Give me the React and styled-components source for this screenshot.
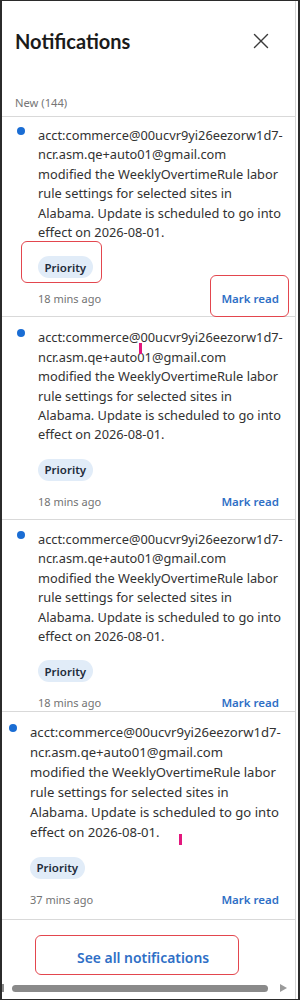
import React from "react";
import styled, { createGlobalStyle } from "styled-components";
import { X } from "lucide-react";

const GlobalStyle = createGlobalStyle`
  html, body {
    margin: 0;
    padding: 0;
    background: #ffffff;
  }
  * {
    box-sizing: border-box;
  }
`;

const font = `"Noto Sans", "Open Sans", "Liberation Sans", sans-serif`;

// outer frame of the flyout
const Frame = styled.div`
  width: 300px;
  height: 1000px;
  display: flex;
  border: 1px solid #2b2b2b;
  border-left-width: 2px;
  border-right-width: 2px;
  background: #fff;
  font-family: ${font};
  overflow: hidden;
`;

const Scroller = styled.div`
  flex: 0 0 294px;
  min-width: 0;
  display: flex;
  flex-direction: column;
  border-right: 1px solid #d6d6d6;
`;

const Header = styled.div`
  height: 80px;
  display: flex;
  align-items: center;
  justify-content: space-between;
  padding: 0 21px 0 13px;
`;

const Title = styled.h1`
  margin: 0;
  font-family: Lato, ${font};
  font-size: 20px;
  line-height: 24px;
  font-weight: 700;
  color: #1b1b1b;
`;

const CloseButton = styled.button`
  display: flex;
  align-items: center;
  justify-content: center;
  padding: 0;
  border: 0;
  background: none;
  color: #3b3b3b;
`;

const SectionLabel = styled.div`
  margin-top: 14px;
  padding: 0 0 5px 13px;
  font-size: 11.2px;
  line-height: 16px;
  color: #767676;
  border-bottom: 1px solid #d9d9d9;
`;

const Item = styled.div`
  position: relative;
  display: flex;
  align-items: flex-start;
  padding: ${(p) => p.$pt}px 11px ${(p) => p.$pb}px ${(p) => 15 - p.$shift}px;
  border-bottom: 1px solid #d9d9d9;
`;

const Dot = styled.span`
  flex: 0 0 8px;
  width: 8px;
  height: 8px;
  margin-top: 1px;
  border-radius: 50%;
  background: #1a6dd4;
`;

const Body = styled.div`
  flex: 1;
  min-width: 0;
  margin-left: 13px;
  display: flex;
  flex-direction: column;
`;

const Message = styled.p`
  margin: 0;
  font-size: ${(p) => 12.8 * p.$scale}px;
  line-height: ${(p) => 19.4 * p.$scale}px;
  color: #323232;
  white-space: nowrap;
`;

const Tags = styled.div`
  margin-top: 14px;
  display: flex;
`;

const Chip = styled.span`
  height: 22px;
  padding: 0 6.5px;
  display: inline-flex;
  align-items: center;
  border-radius: 11px;
  background: #e1ecf8;
  color: #1e2b3a;
  font-size: 11.5px;
  font-weight: 600;
`;

const Meta = styled.div`
  margin-top: 13px;
  padding-right: 5px;
  display: flex;
  justify-content: space-between;
  font-size: 11.5px;
  line-height: 16px;
`;

const Time = styled.span`
  font-size: 11px;
  color: #737373;
`;

const MarkRead = styled.span`
  color: #2f6fc6;
  font-weight: 600;
`;

// red review boxes drawn over the screenshot
const Annotated = styled.span`
  position: relative;
  display: inline-flex;

  &::after {
    content: "";
    position: absolute;
    top: ${(p) => p.$t}px;
    right: ${(p) => p.$r}px;
    bottom: ${(p) => p.$b}px;
    left: ${(p) => p.$l}px;
    border: 1.5px solid #e3464e;
    border-radius: 6px;
    pointer-events: none;
  }
`;

const Caret = styled.span`
  position: absolute;
  width: 3px;
  height: 11px;
  background: #e3177d;
`;

const Footer = styled.div`
  flex: 1;
  display: flex;
  flex-direction: column;
  justify-content: space-between;
  align-items: flex-start;
`;

const FooterAction = styled(Annotated)`
  margin: 29px 0 0 75px;
`;

const SeeAll = styled.button`
  padding: 0;
  border: 0;
  background: none;
  font-family: ${font};
  font-size: 13.9px;
  line-height: 18px;
  font-weight: 600;
  color: #2f6fc6;
`;

const HScroll = styled.div`
  height: 16px;
  margin-bottom: 3px;
  display: flex;
  align-items: center;
`;

const ArrowStub = styled.span`
  width: 2px;
  height: 8px;
  background: #8a8a8a;
`;

const Thumb = styled.span`
  height: 7px;
  margin-left: 8px;
  width: 256px;
  border-radius: 4px;
  background: #8a8a8a;
`;

const ArrowRight = styled.span`
  margin-left: 12px;
  width: 0;
  height: 0;
  border-top: 4.5px solid transparent;
  border-bottom: 4.5px solid transparent;
  border-left: 7px solid #9a9a9a;
`;

// the message as the panel wraps it
const MESSAGE_LINES = [
  "acct:commerce@00ucvr9yi26eezorw1d7-",
  "ncr.asm.qe+auto01@gmail.com",
  "modified the WeeklyOvertimeRule labor",
  "rule settings for selected sites in",
  "Alabama. Update is scheduled to go into",
  "effect on 2026-08-01.",
];

const items = [
  { id: 1, time: "18 mins ago", pt: 9, pb: 9, shift: 0, scale: 1, marked: true },
  { id: 2, time: "18 mins ago", pt: 11, pb: 9, shift: 0, scale: 1, caret: { x: 137, y: 26 } },
  { id: 3, time: "18 mins ago", pt: 10, pb: 0, shift: 0, scale: 1 },
  { id: 4, time: "37 mins ago", pt: 11, pb: 11, shift: 8, scale: 1.025, caret: { x: 177, y: 122 } },
];

const Notification = ({ item }) => (
  <Item $pt={item.pt} $pb={item.pb} $shift={item.shift}>
    <Dot />
    <Body>
      <Message $scale={item.scale}>
        {MESSAGE_LINES.map((line, i) => (
          <React.Fragment key={i}>
            {line}
            {i < MESSAGE_LINES.length - 1 && <br />}
          </React.Fragment>
        ))}
      </Message>
      <Tags>
        {item.marked ? (
          <Annotated $t={-15} $r={-9} $b={-5} $l={-17}>
            <Chip>Priority</Chip>
          </Annotated>
        ) : (
          <Chip>Priority</Chip>
        )}
      </Tags>
      <Meta>
        <Time>{item.time}</Time>
        {item.marked ? (
          <Annotated $t={-16} $r={-10} $b={-10} $l={-11}>
            <MarkRead>Mark read</MarkRead>
          </Annotated>
        ) : (
          <MarkRead>Mark read</MarkRead>
        )}
      </Meta>
    </Body>
    {item.caret && <Caret style={{ left: item.caret.x, top: item.caret.y }} />}
  </Item>
);

export default function App() {
  return (
    <>
      <GlobalStyle />
      <Frame>
        <Scroller>
          <Header>
            <Title>Notifications</Title>
            <CloseButton aria-label="Close">
              <X size={26} strokeWidth={1.3} />
            </CloseButton>
          </Header>
          <SectionLabel>New (144)</SectionLabel>
          {items.map((item) => (
            <Notification key={item.id} item={item} />
          ))}
          <Footer>
            <FooterAction $t={-14} $r={-30} $b={-8} $l={-42}>
              <SeeAll>See all notifications</SeeAll>
            </FooterAction>
            <HScroll>
              <ArrowStub />
              <Thumb />
              <ArrowRight />
            </HScroll>
          </Footer>
        </Scroller>
      </Frame>
    </>
  );
}
